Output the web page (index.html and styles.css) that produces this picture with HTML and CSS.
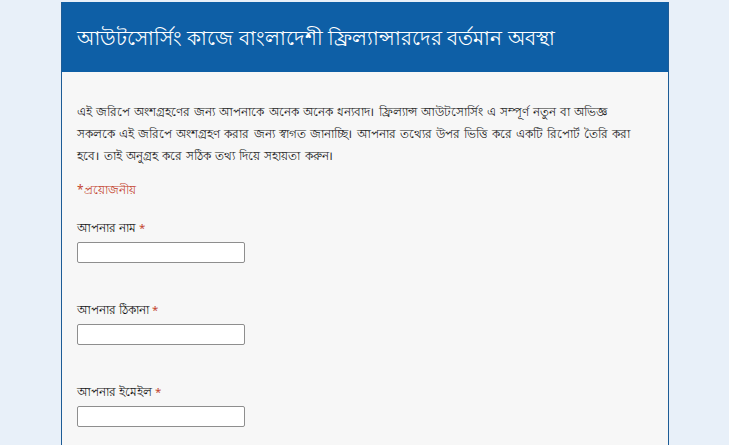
FILE: index.html
```html
<!DOCTYPE html>
<html lang="bn">
<head>
<meta charset="utf-8">
<title>Form</title>
<link rel="stylesheet" href="styles.css">
</head>
<body>
<div class="form">
  <header class="head">
    <h1 class="title">আউটসোর্সিং কাজে বাংলাদেশী ফ্রিল্যান্সারদের বর্তমান অবস্থা</h1>
  </header>
  <div class="body">
    <p class="desc">এই জরিপে অংশগ্রহণের জন্য আপনাকে অনেক অনেক ধন্যবাদ। ফ্রিল্যান্স আউটসোর্সিং এ সম্পূর্ণ নতুন বা অভিজ্ঞ<br>সকলকে এই জরিপে অংশগ্রহণ করার জন্য স্বাগত জানাচ্ছি। আপনার তথ্যের উপর ভিত্তি করে একটি রিপোর্ট তৈরি করা হবে। তাই অনুগ্রহ করে সঠিক তথ্য দিয়ে সহায়তা করুন।</p>
    <p class="req">*প্রয়োজনীয়</p>
    <div class="field">
      <label class="label">আপনার নাম <span class="star">*</span></label>
      <input class="input" type="text">
    </div>
    <div class="field">
      <label class="label">আপনার ঠিকানা <span class="star">*</span></label>
      <input class="input" type="text">
    </div>
    <div class="field">
      <label class="label">আপনার ইমেইল <span class="star">*</span></label>
      <input class="input" type="text">
    </div>
  </div>
</div>
</body>
</html>
```
FILE: styles.css
```css
html, body {
  margin: 0;
  padding: 0;
  background: #e8f0f9;
  height: 100%;
  overflow: hidden;
}
body {
  font-family: "Noto Sans", sans-serif;
  color: #222;
}
.form {
  width: 606px;
  margin: 2px 0 0 61px;
  background: #f7f7f7;
  border-left: 1px solid #1d5c96;
  border-right: 1px solid #1d5c96;
  min-height: 600px;
}
.head {
  background: #0e5fa6;
  height: 70px;
  display: flex;
  align-items: center;
  padding: 0 15px;
}
.title {
  margin: 0;
  color: #fff;
  font-weight: normal;
  font-size: 20.4px;
  line-height: 30px;
}
.body {
  padding: 29px 15px 0 15px;
}
.desc {
  margin: 0;
  max-width: 576px;
  font-size: 12px;
  word-spacing: 1px;
  line-height: 22px;
  color: #222;
}
.req {
  margin: 12px 0 0 0;
  font-size: 12px;
  line-height: 22px;
  color: #c4452f;
}
.field {
  display: flex;
  flex-direction: column;
  align-items: flex-start;
  margin-top: 17px;
  margin-bottom: 37px;
}
.label {
  font-size: 11.5px;
  line-height: 20px;
  color: #111;
}
.star {
  color: #c4452f;
}
.input {
  margin: 4px 0 0 0;
  width: 168px;
  height: 21px;
  box-sizing: border-box;
  border: 1px solid #8e8e8e;
  border-radius: 2px;
  background: #fff;
  padding: 0 4px;
}
```
